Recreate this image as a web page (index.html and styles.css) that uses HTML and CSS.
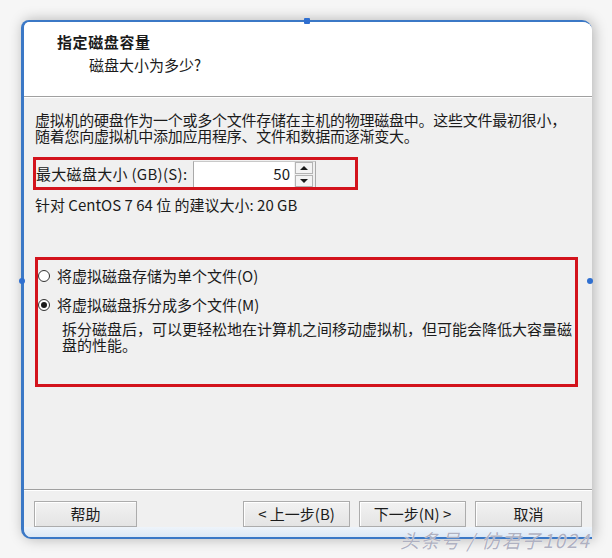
FILE: index.html
```html
<!DOCTYPE html>
<html lang="zh-CN">
<head>
<meta charset="utf-8">
<title>指定磁盘容量</title>
<link rel="stylesheet" href="styles.css">
</head>
<body>
<div class="stage">
  <div class="window">
    <div class="header">
      <div class="title">指定磁盘容量</div>
      <div class="subtitle">磁盘大小为多少?</div>
    </div>
    <div class="content">
      <p class="intro">虚拟机的硬盘作为一个或多个文件存储在主机的物理磁盘中。这些文件最初很小，<br>随着您向虚拟机中添加应用程序、文件和数据而逐渐变大。</p>
      <div class="size-row mark">
        <span class="label">最大磁盘大小 (GB)(S):</span>
        <div class="spin">
          <div class="field">50</div>
          <div class="arrows">
            <span class="arrow up"></span>
            <span class="arrow down"></span>
          </div>
        </div>
      </div>
      <div class="hint">针对 CentOS 7 64 位 的建议大小: 20 GB</div>
      <div class="options mark">
        <div class="radio"><span class="dot"></span>将虚拟磁盘存储为单个文件(O)</div>
        <div class="radio checked"><span class="dot"></span>将虚拟磁盘拆分成多个文件(M)</div>
        <p class="desc">拆分磁盘后，可以更轻松地在计算机之间移动虚拟机，但可能会降低大容量磁<br>盘的性能。</p>
      </div>
    </div>
    <div class="footer">
      <button class="btn help">帮助</button>
      <div class="nav">
        <button class="btn">&lt; 上一步(B)</button>
        <button class="btn">下一步(N) &gt;</button>
        <button class="btn">取消</button>
      </div>
    </div>
    <div class="strip"></div>
  </div>
  <span class="handle h-top"></span>
  <span class="handle h-left"></span>
  <span class="handle h-right"></span>
  <div class="watermark">头条号 / 仿君子1024</div>
</div>
</body>
</html>
```
FILE: styles.css
```css
* { box-sizing: border-box; }
html, body { margin: 0; padding: 0; }
body {
  width: 612px;
  height: 558px;
  overflow: hidden;
  background: #f6f6f6;
  font-family: "Noto Sans CJK SC", "Noto Sans", sans-serif;
  font-size: 15px;
  color: #1b1b1b;
}
.stage {
  position: relative;
  width: 612px;
  height: 558px;
  padding: 20px 20px 0 21px;
}
.window {
  width: 571px;
  height: 519px;
  display: flex;
  flex-direction: column;
  background: #f0f0f0;
  border-left: 3px solid #3b78c6;
  border-top: 2px solid #3b78c6;
  border-bottom: 2px solid #3b78c6;
  border-radius: 8px 10px 0 10px;
  box-shadow: 2px 0 14px rgba(0,0,0,0.28);
  overflow: hidden;
}
.header {
  height: 75px;
  background: #ffffff;
  border-bottom: 1px solid #a0a0a0;
  padding: 11px 0 0 33px;
  line-height: 18px;
}
.title { font-weight: bold; letter-spacing: 0.6px; }
.subtitle { margin-top: 5px; padding-left: 32px; }
.content {
  flex: 1;
  border-top: 1px solid #ffffff;
  padding: 14px 0 0 11px;
}
.intro {
  margin: 0;
  line-height: 16px;
  letter-spacing: -0.25px;
}
.mark { border: 3px solid #d3131c; }
.size-row {
  margin: 13px 0 0 -2px;
  width: 325px;
  height: 33px;
  display: flex;
  align-items: center;
}
.label { width: 157px; line-height: 18px; letter-spacing: 0.3px; }
.spin {
  display: flex;
  height: 26px;
  width: 123px;
  border-left: 1px solid #a9a9a9;
  border-top: 1px solid #c9c9c9;
  border-right: 1px solid #a9a9a9;
}
.field {
  width: 100px;
  background: #ffffff;
  text-align: right;
  padding-right: 4px;
  line-height: 24px;
}
.arrows {
  width: 18px;
  margin-left: 1px;
  display: flex;
  flex-direction: column;
  gap: 1px;
}
.arrow {
  flex: 1;
  position: relative;
  border: 1px solid #b4b4b4;
  background: #f4f4f4;
}
.arrow::after {
  content: "";
  position: absolute;
  left: 50%;
  top: 50%;
  margin-left: -4px;
  border-left: 4px solid transparent;
  border-right: 4px solid transparent;
}
.up::after { margin-top: -2px; border-bottom: 4px solid #1b1b1b; }
.down::after { margin-top: -2px; border-top: 4px solid #1b1b1b; }
.hint {
  margin-top: 6px;
  line-height: 18px;
}
.options {
  margin-top: 43px;
  width: 543px;
  height: 130px;
  padding-top: 7px;
}
.radio {
  display: flex;
  align-items: center;
  line-height: 18px;
}
.radio + .radio { margin-top: 11px; }
.dot {
  width: 12px;
  height: 12px;
  border: 1px solid #333;
  border-radius: 50%;
  background: #fff;
  margin-right: 7px;
  position: relative;
}
.checked .dot::after {
  content: "";
  position: absolute;
  left: 2px;
  top: 2px;
  width: 6px;
  height: 6px;
  border-radius: 50%;
  background: #1b1b1b;
}
.desc {
  margin: 7px 0 0 24px;
  line-height: 16px;
}
.footer {
  height: 38px;
  border-top: 1px solid #a0a0a0;
  box-shadow: inset 0 1px 0 #ffffff;
  padding: 11px 10px 0 10px;
  display: flex;
  justify-content: space-between;
}
.nav { display: flex; gap: 9px; }
.btn {
  width: 107px;
  height: 26px;
  font: inherit;
  color: #1b1b1b;
  background: linear-gradient(#f2f2f2, #e4e4e4);
  border: 1px solid #acacac;
  box-shadow: inset 1px 1px 0 #fff;
  padding: 0;
  line-height: 22px;
}
.help { width: 103px; }
.strip {
  height: 10px;
  background: linear-gradient(#eef4fa, #dce8f5);
}
.handle {
  position: absolute;
  width: 6px;
  height: 6px;
  border-radius: 50%;
  background: #2f6fd0;
}
.h-top { left: 304px; top: 18px; border-radius: 1px; }
.h-left { left: 19px; top: 278px; }
.h-right { left: 587px; top: 278px; }
.watermark {
  position: absolute;
  left: 400px;
  top: 526px;
  font-size: 19px;
  font-style: italic;
  letter-spacing: 1.4px;
  color: rgba(165,167,185,0.9);
  text-shadow: 0 0 1px #fff;
}
```
